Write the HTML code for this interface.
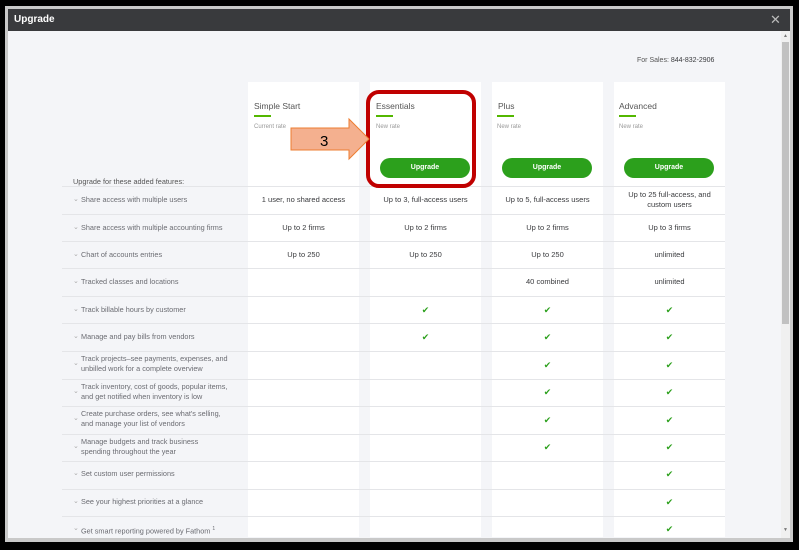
<!DOCTYPE html>
<html><head><meta charset="utf-8"><style>
*{margin:0;padding:0;box-sizing:border-box}
body{width:799px;height:550px;background:#000;position:relative;overflow:hidden;font-family:"Liberation Sans",sans-serif}
.a{position:absolute}
#frame{left:5px;top:6px;width:788px;height:536px;background:#c9c9c9}
#title{left:8px;top:9px;width:782px;height:22px;background:#393a3d;color:#fff;font-weight:bold;font-size:10px;line-height:22px;padding-left:6px}
#x{left:770px;top:9px;color:#bbb;font-size:13px;line-height:22px}
#content{left:8px;top:31px;width:773px;height:507px;background:#f4f5f8;overflow:hidden}
#sb{left:781px;top:31px;width:9px;height:507px;background:#f0f0f0}
#thumb{left:782px;top:42px;width:7px;height:282px;background:#c1c1c1}
.card{background:#fff;width:111px}
.pn{font-size:8.5px;color:#555}
.ul{width:17px;height:2px;background:#53b700}
.rate{font-size:6px;color:#999}
.btn{width:90px;height:20px;border-radius:10px;background:#2ca01c;color:#fff;font-size:7px;font-weight:bold;text-align:center;line-height:20px}
.line{left:62px;width:663px;height:1px;background:#e4e5e8}
.lab{left:81px;font-size:7.3px;color:#6b6c72;line-height:10px}
.lab i{font-style:normal;color:#aaa;position:absolute;left:-8px;font-size:7px}
.val{width:111px;text-align:center;font-size:7.5px;color:#393a3d;line-height:10px}
.ck{width:111px;text-align:center;color:#2ca01c;font-size:9px;line-height:10px}
</style></head><body>
<div class="a" id="frame"></div>
<div class="a" id="title">Upgrade</div>
<div class="a" id="x">✕</div>
<div class="a" id="content"></div>
<div class="a" id="sb"></div>
<div class="a" id="thumb"></div>
<div class="a" style="left:783px;top:33px;font-size:5px;color:#777">▲</div>
<div class="a" style="left:783px;top:527px;font-size:5px;color:#777">▼</div>

<div class="a" style="left:637px;top:57px;font-size:7px;color:#555">For Sales: <span style="color:#393a3d">844-832-2906</span></div>

<div class="a card" style="left:248px;top:82px;height:455px"></div>
<div class="a card" style="left:370px;top:82px;height:455px"></div>
<div class="a card" style="left:492px;top:82px;height:455px"></div>
<div class="a card" style="left:614px;top:82px;height:455px"></div>

<div class="a pn" style="left:254px;top:101px">Simple Start</div>
<div class="a pn" style="left:376px;top:101px">Essentials</div>
<div class="a pn" style="left:498px;top:101px">Plus</div>
<div class="a pn" style="left:619px;top:101px">Advanced</div>
<div class="a ul" style="left:254px;top:115px"></div>
<div class="a ul" style="left:376px;top:115px"></div>
<div class="a ul" style="left:497px;top:115px"></div>
<div class="a ul" style="left:619px;top:115px"></div>
<div class="a rate" style="left:254px;top:124px">Current rate</div>
<div class="a rate" style="left:376px;top:124px">New rate</div>
<div class="a rate" style="left:497px;top:124px">New rate</div>
<div class="a rate" style="left:619px;top:124px">New rate</div>
<div class="a btn" style="left:380px;top:158px">Upgrade</div>
<div class="a btn" style="left:502px;top:158px">Upgrade</div>
<div class="a btn" style="left:624px;top:158px">Upgrade</div>

<div class="a" style="left:73px;top:177px;font-size:7.3px;color:#555">Upgrade for these added features:</div>

<div class="a line" style="top:186px"></div>
<div class="a line" style="top:214px"></div>
<div class="a line" style="top:241px"></div>
<div class="a line" style="top:268px"></div>
<div class="a line" style="top:296px"></div>
<div class="a line" style="top:323px"></div>
<div class="a line" style="top:351px"></div>
<div class="a line" style="top:379px"></div>
<div class="a line" style="top:406px"></div>
<div class="a line" style="top:434px"></div>
<div class="a line" style="top:461px"></div>
<div class="a line" style="top:489px"></div>
<div class="a line" style="top:516px"></div>

<div class="a lab" style="top:195px"><i>⌄</i>Share access with multiple users</div>
<div class="a lab" style="top:223px"><i>⌄</i>Share access with multiple accounting firms</div>
<div class="a lab" style="top:250px"><i>⌄</i>Chart of accounts entries</div>
<div class="a lab" style="top:277px"><i>⌄</i>Tracked classes and locations</div>
<div class="a lab" style="top:305px"><i>⌄</i>Track billable hours by customer</div>
<div class="a lab" style="top:332px"><i>⌄</i>Manage and pay bills from vendors</div>
<div class="a lab" style="top:354px"><i style="top:5px">⌄</i>Track projects–see payments, expenses, and<br>unbilled work for a complete overview</div>
<div class="a lab" style="top:382px"><i style="top:5px">⌄</i>Track inventory, cost of goods, popular items,<br>and get notified when inventory is low</div>
<div class="a lab" style="top:409px"><i style="top:5px">⌄</i>Create purchase orders, see what's selling,<br>and manage your list of vendors</div>
<div class="a lab" style="top:437px"><i style="top:5px">⌄</i>Manage budgets and track business<br>spending throughout the year</div>
<div class="a lab" style="top:469px"><i>⌄</i>Set custom user permissions</div>
<div class="a lab" style="top:497px"><i>⌄</i>See your highest priorities at a glance</div>
<div class="a lab" style="top:524px"><i>⌄</i>Get smart reporting powered by Fathom <sup style="font-size:5px">1</sup></div>

<div class="a val" style="left:248px;top:195px">1 user, no shared access</div>
<div class="a val" style="left:370px;top:195px">Up to 3, full-access users</div>
<div class="a val" style="left:492px;top:195px">Up to 5, full-access users</div>
<div class="a val" style="left:614px;top:190px">Up to 25 full-access, and<br>custom users</div>
<div class="a val" style="left:248px;top:223px">Up to 2 firms</div>
<div class="a val" style="left:370px;top:223px">Up to 2 firms</div>
<div class="a val" style="left:492px;top:223px">Up to 2 firms</div>
<div class="a val" style="left:614px;top:223px">Up to 3 firms</div>
<div class="a val" style="left:248px;top:250px">Up to 250</div>
<div class="a val" style="left:370px;top:250px">Up to 250</div>
<div class="a val" style="left:492px;top:250px">Up to 250</div>
<div class="a val" style="left:614px;top:250px">unlimited</div>
<div class="a val" style="left:492px;top:277px">40 combined</div>
<div class="a val" style="left:614px;top:277px">unlimited</div>

<div class="a ck" style="left:370px;top:305px">✔</div>
<div class="a ck" style="left:492px;top:305px">✔</div>
<div class="a ck" style="left:614px;top:305px">✔</div>
<div class="a ck" style="left:370px;top:332px">✔</div>
<div class="a ck" style="left:492px;top:332px">✔</div>
<div class="a ck" style="left:614px;top:332px">✔</div>
<div class="a ck" style="left:492px;top:360px">✔</div>
<div class="a ck" style="left:614px;top:360px">✔</div>
<div class="a ck" style="left:492px;top:387px">✔</div>
<div class="a ck" style="left:614px;top:387px">✔</div>
<div class="a ck" style="left:492px;top:415px">✔</div>
<div class="a ck" style="left:614px;top:415px">✔</div>
<div class="a ck" style="left:492px;top:442px">✔</div>
<div class="a ck" style="left:614px;top:442px">✔</div>
<div class="a ck" style="left:614px;top:469px">✔</div>
<div class="a ck" style="left:614px;top:497px">✔</div>
<div class="a ck" style="left:614px;top:524px">✔</div>

<div class="a" style="left:366px;top:90px;width:110px;height:98px;border:4px solid #c00000;border-radius:13px"></div>
<svg class="a" style="left:288px;top:116px" width="86" height="46" viewBox="0 0 86 46">
<polygon points="3,12 61,12 61,3 81,23 61,43 61,34 3,34" fill="#f4b08f" stroke="#ed7d31" stroke-width="1"/>
<text x="32" y="30" font-family="Liberation Sans, sans-serif" font-size="15" fill="#000">3</text>
</svg>
</body></html>
